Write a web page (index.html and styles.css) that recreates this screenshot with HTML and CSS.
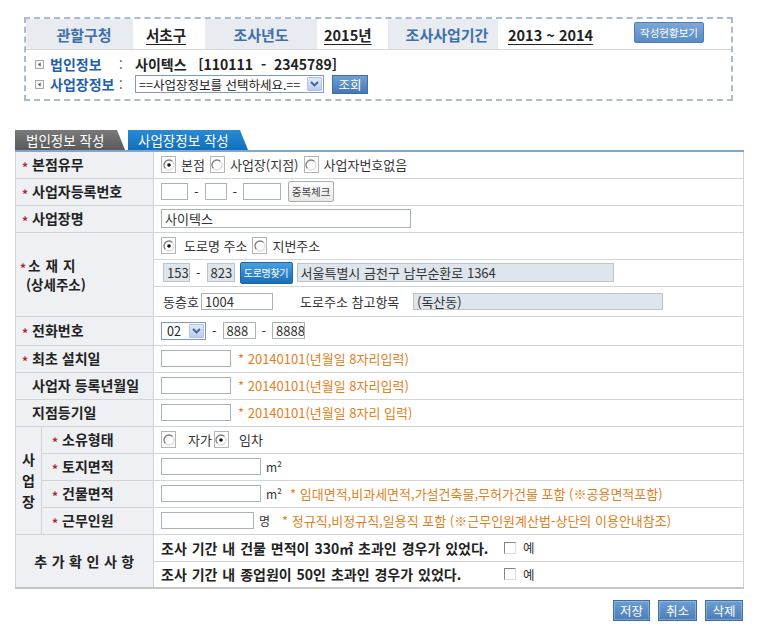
FILE: index.html
```html
<!DOCTYPE html>
<html lang="ko">
<head>
<meta charset="utf-8">
<title>사업장정보 작성</title>
<link rel="stylesheet" href="styles.css">
</head>
<body>
<div class="page">
  <div class="summary">
    <div class="sum-head">
      <div class="sh-label c1">관할구청</div>
      <div class="sh-val c2"><span class="ul">서초구</span></div>
      <div class="sh-label c3">조사년도</div>
      <div class="sh-val c4"><span class="ul">2015년</span></div>
      <div class="sh-label c5">조사사업기간</div>
      <div class="sh-val c6"><span class="ul">2013 ~ 2014</span><span class="btn-status">작성현황보기</span></div>
    </div>
    <div class="sum-line first">
      <svg class="bullet" viewBox="0 0 9 9" width="9" height="9"><rect x="0.5" y="0.5" width="8" height="8" fill="#f5f5f5" stroke="#a8a8a8"/><polygon points="5.6,2.4 3,4.5 5.6,6.6" fill="#555"/></svg>
      <span class="sl-label">법인정보</span><span class="sl-colon">:</span>
      <span class="sl-value">사이텍스&nbsp;&nbsp;&nbsp;[110111&nbsp;&nbsp;-&nbsp;&nbsp;2345789]</span>
    </div>
    <div class="sum-line second">
      <svg class="bullet" viewBox="0 0 9 9" width="9" height="9"><rect x="0.5" y="0.5" width="8" height="8" fill="#f5f5f5" stroke="#a8a8a8"/><polygon points="5.6,2.4 3,4.5 5.6,6.6" fill="#555"/></svg>
      <span class="sl-label">사업장정보</span><span class="sl-colon">:</span>
      <div class="sel sel-wide"><span class="sel-text">==사업장정보를 선택하세요.==</span><span class="sel-arrow"><svg width="9" height="6" viewBox="0 0 9 6"><path d="M1 1 L4.5 4.5 L8 1" fill="none" stroke="#4d6185" stroke-width="1.8"/></svg></span></div>
      <span class="btn-blue btn-search">조회</span>
    </div>
  </div>

  <div class="tabs">
    <div class="tab tab-off">법인정보 작성</div>
    <div class="tab tab-on">사업장정보 작성</div>
  </div>

  <table class="form">
    <colgroup><col class="col-a"><col class="col-b"><col class="col-c"></colgroup>
    <tr>
      <th colspan="2" class="lb"><span class="req">*</span>본점유무</th>
      <td><div class="line">
        <span class="rb"><svg width="12" height="12" viewBox="0 0 12 12"><circle cx="6" cy="6" r="5" fill="#fff"/><path d="M2.46 9.54A5 5 0 0 1 9.54 2.46" fill="none" stroke="#7c7c7c" stroke-width="1.3"/><path d="M9.54 2.46A5 5 0 0 1 2.46 9.54" fill="none" stroke="#dedede" stroke-width="1.3"/><circle cx="6" cy="6" r="1.8" fill="#111"/></svg></span><span class="opt">본점</span>
        <span class="rb"><svg width="12" height="12" viewBox="0 0 12 12"><circle cx="6" cy="6" r="5" fill="#fff"/><path d="M2.46 9.54A5 5 0 0 1 9.54 2.46" fill="none" stroke="#7c7c7c" stroke-width="1.3"/><path d="M9.54 2.46A5 5 0 0 1 2.46 9.54" fill="none" stroke="#dedede" stroke-width="1.3"/></svg></span><span class="opt">사업장(지점)</span>
        <span class="rb"><svg width="12" height="12" viewBox="0 0 12 12"><circle cx="6" cy="6" r="5" fill="#fff"/><path d="M2.46 9.54A5 5 0 0 1 9.54 2.46" fill="none" stroke="#7c7c7c" stroke-width="1.3"/><path d="M9.54 2.46A5 5 0 0 1 2.46 9.54" fill="none" stroke="#dedede" stroke-width="1.3"/></svg></span><span class="opt">사업자번호없음</span>
      </div></td>
    </tr>
    <tr>
      <th colspan="2" class="lb"><span class="req">*</span>사업자등록번호</th>
      <td><div class="line">
        <span class="inp w27"></span><span class="dash">-</span><span class="inp w22"></span><span class="dash">-</span><span class="inp w38"></span>
        <span class="btn-gray">중복체크</span>
      </div></td>
    </tr>
    <tr>
      <th colspan="2" class="lb"><span class="req">*</span>사업장명</th>
      <td><div class="line"><span class="inp w250 tall">사이텍스</span></div></td>
    </tr>
    <tr>
      <th colspan="2" rowspan="3" class="lb addr">
        <div class="addr-l1"><span class="req">*</span><span class="ls">소재지</span></div>
        <div class="addr-l2">(상세주소)</div>
      </th>
      <td><div class="line">
        <span class="rb"><svg width="12" height="12" viewBox="0 0 12 12"><circle cx="6" cy="6" r="5" fill="#fff"/><path d="M2.46 9.54A5 5 0 0 1 9.54 2.46" fill="none" stroke="#7c7c7c" stroke-width="1.3"/><path d="M9.54 2.46A5 5 0 0 1 2.46 9.54" fill="none" stroke="#dedede" stroke-width="1.3"/><circle cx="6" cy="6" r="1.8" fill="#111"/></svg></span><span class="opt road">도로명 주소</span>
        <span class="rb"><svg width="12" height="12" viewBox="0 0 12 12"><circle cx="6" cy="6" r="5" fill="#fff"/><path d="M2.46 9.54A5 5 0 0 1 9.54 2.46" fill="none" stroke="#7c7c7c" stroke-width="1.3"/><path d="M9.54 2.46A5 5 0 0 1 2.46 9.54" fill="none" stroke="#dedede" stroke-width="1.3"/></svg></span><span class="opt">지번주소</span>
      </div></td>
    </tr>
    <tr>
      <td><div class="line indent">
        <span class="inp gray w27 h19">153</span><span class="dash">-</span><span class="inp gray w28 h19">823</span>
        <span class="btn-road">도로명찾기</span>
        <span class="inp gray w317 h19 addr-main">서울특별시 금천구 남부순환로 1364</span>
      </div></td>
    </tr>
    <tr class="r30">
      <td><div class="line indent">
        <span class="dong-label">동층호</span><span class="inp w72">1004</span>
        <span class="ref-label">도로주소 참고항목</span><span class="inp gray w250">(독산동)</span>
      </div></td>
    </tr>
    <tr class="r29">
      <th colspan="2" class="lb"><span class="req">*</span>전화번호</th>
      <td><div class="line">
        <div class="sel sel-small"><span class="sel-text">02</span><span class="sel-arrow"><svg width="9" height="6" viewBox="0 0 9 6"><path d="M1 1 L4.5 4.5 L8 1" fill="none" stroke="#4d6185" stroke-width="1.8"/></svg></span></div>
        <span class="dash">-</span><span class="inp w33">888</span><span class="dash">-</span><span class="inp w33">8888</span>
      </div></td>
    </tr>
    <tr>
      <th colspan="2" class="lb"><span class="req">*</span>최초 설치일</th>
      <td><div class="line"><span class="inp w70"></span><span class="hint">* 20140101(년월일 8자리입력)</span></div></td>
    </tr>
    <tr>
      <th colspan="2" class="lb"><span class="req blank">*</span>사업자 등록년월일</th>
      <td><div class="line"><span class="inp w70"></span><span class="hint">* 20140101(년월일 8자리입력)</span></div></td>
    </tr>
    <tr>
      <th colspan="2" class="lb"><span class="req blank">*</span>지점등기일</th>
      <td><div class="line"><span class="inp w70"></span><span class="hint">* 20140101(년월일 8자리 입력)</span></div></td>
    </tr>
    <tr>
      <th rowspan="4" class="lb vert">사<br>업<br>장</th>
      <th class="lb sub"><span class="req">*</span>소유형태</th>
      <td><div class="line">
        <span class="rb"><svg width="12" height="12" viewBox="0 0 12 12"><circle cx="6" cy="6" r="5" fill="#fff"/><path d="M2.46 9.54A5 5 0 0 1 9.54 2.46" fill="none" stroke="#7c7c7c" stroke-width="1.3"/><path d="M9.54 2.46A5 5 0 0 1 2.46 9.54" fill="none" stroke="#dedede" stroke-width="1.3"/></svg></span><span class="opt own1">자가</span>
        <span class="rb"><svg width="12" height="12" viewBox="0 0 12 12"><circle cx="6" cy="6" r="5" fill="#fff"/><path d="M2.46 9.54A5 5 0 0 1 9.54 2.46" fill="none" stroke="#7c7c7c" stroke-width="1.3"/><path d="M9.54 2.46A5 5 0 0 1 2.46 9.54" fill="none" stroke="#dedede" stroke-width="1.3"/><circle cx="6" cy="6" r="1.8" fill="#111"/></svg></span><span class="opt own2">임차</span>
      </div></td>
    </tr>
    <tr>
      <th class="lb sub"><span class="req">*</span>토지면적</th>
      <td><div class="line"><span class="inp w100"></span><span class="unit">m²</span></div></td>
    </tr>
    <tr>
      <th class="lb sub"><span class="req">*</span>건물면적</th>
      <td><div class="line"><span class="inp w100"></span><span class="unit">m²</span><span class="hint hint-far">* 임대면적,비과세면적,가설건축물,무허가건물 포함 (※공용면적포함)</span></div></td>
    </tr>
    <tr>
      <th class="lb sub"><span class="req">*</span>근무인원</th>
      <td><div class="line"><span class="inp w93"></span><span class="unit">명</span><span class="hint hint-far2">* 정규직,비정규직,일용직 포함 (※근무인원계산법-상단의 이용안내참조)</span></div></td>
    </tr>
    <tr>
      <th colspan="2" rowspan="2" class="lb extra">추가확인사항</th>
      <td><div class="line q"><span class="q-text">조사 기간 내 건물 면적이 330㎡ 초과인 경우가 있었다.</span><span class="cb"></span><span class="yes">예</span></div></td>
    </tr>
    <tr class="last">
      <td><div class="line q"><span class="q-text">조사 기간 내 종업원이 50인 초과인 경우가 있었다.</span><span class="cb"></span><span class="yes">예</span></div></td>
    </tr>
  </table>

  <div class="actions">
    <span class="btn-act w37">저장</span>
    <span class="btn-act w39">취소</span>
    <span class="btn-act w38b">삭제</span>
  </div>
</div>
</body>
</html>
```
FILE: styles.css
```css
* { box-sizing: border-box; }
html, body { margin: 0; padding: 0; background: #fff; }
body {
  font-family: "Noto Sans CJK KR", "Noto Sans", "Liberation Sans", sans-serif;
  font-size: 13px;
  color: #333;
}
.page { width: 757px; padding-top: 17px; }

/* summary box */
.summary {
  margin-left: 24px;
  width: 709px;
  border: 2px dashed #a7bbd3;
  padding-bottom: 5px;
}
.sum-head {
  display: flex;
  height: 31px;
  border-bottom: 1px solid #d6d6d6;
}
.sh-label {
  display: flex;
  align-items: center;
  justify-content: center;
  background: #e8ecf0;
  color: #3e6eae;
  font-size: 15px;
  font-weight: bold;
}
.sh-val {
  display: flex;
  align-items: center;
  font-size: 14.5px;
  font-weight: bold;
  color: #222;
}
.c1 { width: 107px; padding-left: 9px; }
.c2 { width: 72px; padding-left: 13px; }
.c3 { width: 112px; }
.c4 { width: 71px; padding-left: 7px; }
.c5 { width: 110px; padding-left: 8px; }
.c6 { flex: 1; padding-left: 10px; padding-right: 27px; }
.ul { text-decoration: underline; text-underline-offset: 3px; }
.btn-status {
  margin-left: auto;
  align-self: flex-start;
  margin-top: 3px;
  width: 70px;
  height: 21px;
  background: linear-gradient(#7ba8d8, #5a8bc3);
  border: 1px solid #4d7db4;
  border-radius: 2px;
  color: #fff;
  font-size: 10.5px;
  font-weight: normal;
  display: flex;
  align-items: center;
  justify-content: center;
  white-space: nowrap;
}
.sum-line { display: flex; align-items: center; padding-left: 9px; }
.sum-line.first { margin-top: 6px; height: 16px; }
.sum-line.second { margin-top: 2px; height: 20px; }
.bullet { flex: none; margin-right: 6px; }
.sl-label { width: 69px; color: #1f5fae; font-size: 14px; font-weight: bold; white-space: nowrap; }
.sl-colon { width: 16px; font-size: 13px; color: #333; }
.sl-value { font-size: 14px; font-weight: bold; color: #222; white-space: nowrap; }

.sel {
  display: flex;
  align-items: center;
  justify-content: space-between;
  height: 18px;
  border: 1px solid #7f9db9;
  background: #fff;
  font-size: 12.5px;
  color: #222;
  flex: none;
}
.sel-text { white-space: nowrap; overflow: hidden; }
.sel-wide { width: 189px; padding-left: 3px; }
.sel-small { width: 45px; padding-left: 5px; }
.sel-arrow {
  flex: none;
  width: 15px;
  height: 14px;
  margin-right: 1px;
  background: linear-gradient(#e0e9fc, #b8ccf3);
  border: 1px solid #b0c2ea;
  border-radius: 1px;
  display: flex;
  align-items: center;
  justify-content: center;
}
.btn-blue {
  display: flex;
  align-items: center;
  justify-content: center;
  background: linear-gradient(#6fa0d5, #4677b3);
  border: 1px solid #3f6ea8;
  color: #fff;
  font-size: 12.5px;
}
.btn-search { width: 36px; height: 19px; margin-left: 8px; margin-top: 1px; }

/* tabs */
.tabs { display: flex; gap: 3px; margin: 29px 0 0 15px; height: 20px; }
.tab {
  display: flex;
  align-items: center;
  color: #fff;
  font-size: 13.5px;
  white-space: nowrap;
  clip-path: polygon(0 0, calc(100% - 8px) 0, 100% 100%, 0 100%);
}
.tab-off { width: 110px; padding-left: 11px; background: linear-gradient(#7a7a7a, #5a5a5a); }
.tab-on { width: 120px; padding-left: 10px; background: linear-gradient(#2a8ad3, #0f6fbc); }

/* form table */
.form {
  margin-left: 15px;
  width: 728px;
  border-collapse: collapse;
  table-layout: fixed;
  border-top: 2px solid #7da8d3;
}
.col-a { width: 26px; }
.col-b { width: 112px; }
.col-c { width: 590px; }
.form th, .form td {
  border: 1px solid #d0d3d7;
  padding: 0;
  height: 27px;
}
.form tr.r30 td { height: 30px; }
.form tr.r29 th, .form tr.r29 td { height: 29px; }
.form tr.last td { border-bottom: 2px solid #c6c6c6; }
.form .extra { border-bottom: 2px solid #c6c6c6; }
.form td { padding: 0 7px; font-size: 13px; color: #333; }
.lb {
  background: #eef0f3;
  text-align: left;
  font-size: 14px;
  font-weight: bold;
  color: #222;
  white-space: nowrap;
}
.form th.lb { padding-left: 6px; }
.form th.sub { padding-left: 10px; }
.req { color: #b0262e; font-size: 12px; margin-right: 4px; vertical-align: -2px; }
.req.blank { visibility: hidden; }
.form th.addr { padding-left: 4px; font-size: 13.5px; line-height: 17px; padding-top: 1px; }
.addr .req { margin-right: 2px; }
.addr-l2 { padding-left: 6px; }
.ls { letter-spacing: 5px; }
.form th.vert { text-align: center; padding: 0; line-height: 21px; }
.form th.extra { text-align: center; letter-spacing: 4.5px; padding-left: 4px; }

.line { display: flex; align-items: center; white-space: nowrap; }
.line.indent { padding-left: 2px; }
.rb {
  flex: none;
  display: inline-flex;
  align-items: center;
  justify-content: center;
  width: 15px;
  height: 17px;
  border: 1px solid #b4b4b4;
  background: #fff;
  margin-right: 5px;
}
.opt { margin-right: 5px; }
.opt.road { margin-left: 3px; }
.own1 { margin-left: 7px; margin-right: 2px; }
.own2 { margin-left: 5px; }

.inp {
  flex: none;
  display: flex;
  align-items: center;
  height: 17px;
  border: 1px solid #a9b2bc;
  background: #fff;
  padding-left: 3px;
  font-size: 13px;
  color: #333;
  white-space: nowrap;
  overflow: hidden;
}
.inp.tall { height: 19px; }
.inp.h19 { height: 19px; }
.inp.gray { background: #dfe5ec; border-color: #bcc3cb; }
.w22 { width: 22px; }
.w27 { width: 27px; }
.w28 { width: 28px; }
.w33 { width: 33px; }
.w38 { width: 38px; }
.w70 { width: 70px; }
.w72 { width: 72px; }
.w93 { width: 93px; }
.w100 { width: 100px; }
.w250 { width: 250px; }
.w317 { width: 317px; }
.dash { margin: 0 6px; }
.btn-gray {
  margin-left: 7px;
  width: 46px;
  height: 21px;
  display: flex;
  align-items: center;
  justify-content: center;
  background: linear-gradient(#fdfdfd, #e8e8e8);
  border: 1px solid #adadad;
  border-radius: 2px;
  font-size: 10.5px;
  color: #444;
}
.btn-road {
  margin-left: 5px;
  width: 53px;
  height: 22px;
  display: flex;
  align-items: center;
  justify-content: center;
  background: linear-gradient(#45a0e0, #1a6fb8);
  border: 1px solid #1e66a8;
  border-radius: 2px;
  color: #fff;
  font-size: 10px;
  letter-spacing: -0.3px;
  white-space: nowrap;
}
.addr-main { margin-left: 4px; }
.dong-label { width: 38px; }
.ref-label { margin-left: 27px; width: 113px; }
.hint { color: #e07f1d; font-size: 13px; margin-left: 7px; white-space: nowrap; }
.unit { margin-left: 5px; font-size: 12px; }
.hint-far { margin-left: 8px; }
.hint-far2 { margin-left: 12px; }

.q { font-size: 14px; font-weight: bold; color: #222; }
.q-text { width: 343px; word-spacing: 1px; white-space: nowrap; }
.cb {
  flex: none;
  width: 12px;
  height: 12px;
  border: 1px solid;
  border-color: #858585 #dcdcdc #dcdcdc #858585;
  background: #fff;
  margin-right: 7px;
}
.yes { font-weight: normal; font-size: 12.5px; color: #333; }

/* bottom actions */
.actions {
  width: 743px;
  display: flex;
  justify-content: flex-end;
  gap: 8px;
  margin-top: 11px;
}
.btn-act {
  height: 21px;
  display: flex;
  align-items: center;
  justify-content: center;
  background: linear-gradient(#6c9dd2, #4b7db9);
  border: 1px solid #3e6ea6;
  box-shadow: inset 0 0 0 1px rgba(255,255,255,0.25);
  color: #fff;
  font-size: 12.5px;
}
.w37 { width: 37px; }
.w39 { width: 39px; }
.w38b { width: 38px; }
```
